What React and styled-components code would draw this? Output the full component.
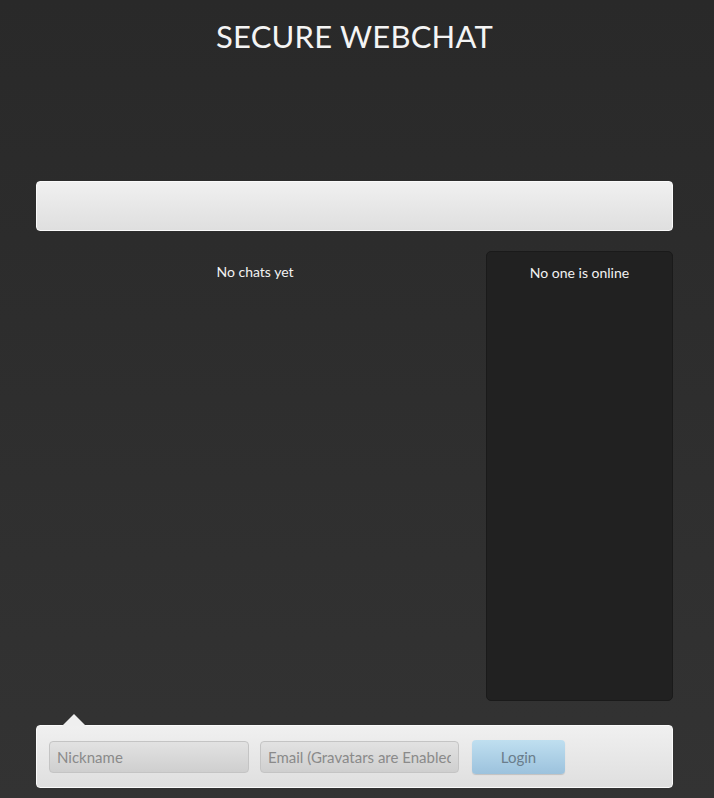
import React from 'react';
import styled, { createGlobalStyle } from 'styled-components';

const GlobalStyle = createGlobalStyle`
  html, body {
    margin: 0;
    padding: 0;
  }
  body {
    font-family: Lato, "Open Sans", sans-serif;
    background: #2a2a2a;
  }
`;

const Page = styled.div`
  height: 798px;
  box-sizing: border-box;
  background: linear-gradient(180deg, #292929 0%, #333333 100%);
  padding: 0 41px 0 36px;
  display: flex;
  flex-direction: column;
`;

const Title = styled.h1`
  margin: 0;
  padding-top: 16px;
  height: 181px;
  box-sizing: border-box;
  text-align: center;
  color: #f4f4f4;
  font-size: 31px;
  font-weight: 400;
  line-height: 40px;
  letter-spacing: 0.2px;
`;

const Bar = styled.div`
  background: linear-gradient(180deg, #f0f0f0 0%, #dfdfdf 100%);
  border: 1px solid #fafafa;
  border-radius: 4px;
  box-sizing: border-box;
`;

const TopBar = styled(Bar)`
  height: 50px;
`;

const Main = styled.div`
  margin-top: 20px;
  display: flex;
  gap: 12px;
  height: 450px;
`;

const ChatArea = styled.div`
  flex: 1;
  text-align: center;
  color: #f2f2f2;
  font-size: 14px;
  padding-top: 12px;
`;

const OnlinePanel = styled.div`
  width: 187px;
  box-sizing: border-box;
  background: #212121;
  border: 1px solid #1a1a1a;
  border-radius: 5px;
  text-align: center;
  color: #f2f2f2;
  font-size: 14px;
  padding-top: 12px;
`;

const LoginWrap = styled.div`
  position: relative;
  margin-top: 24px;
`;

const Arrow = styled.div`
  position: absolute;
  left: 26px;
  top: -11px;
  width: 0;
  height: 0;
  border-left: 12px solid transparent;
  border-right: 12px solid transparent;
  border-bottom: 12px solid #efefef;
`;

const LoginBar = styled(Bar)`
  height: 63px;
  display: flex;
  align-items: center;
  padding: 0 12px;
  gap: 11px;
`;

const Input = styled.input`
  width: ${p => p.$w}px;
  height: 32px;
  box-sizing: border-box;
  border: 1px solid #c4c4c4;
  border-radius: 4px;
  background: linear-gradient(180deg, #e2e2e2 0%, #cfcfcf 100%);
  padding: 0 7px;
  font-family: Lato, "Open Sans", sans-serif;
  font-size: 15px;
  color: #555;
  outline: none;

  &::placeholder {
    color: #8a8a8a;
  }
`;

const LoginButton = styled.button`
  margin-left: 2px;
  width: 93px;
  height: 34px;
  border: none;
  border-radius: 4px;
  background: linear-gradient(180deg, #bfdff0 0%, #9cc2dd 100%);
  box-shadow: 0 1px 1px rgba(0, 0, 0, 0.15);
  font-family: Lato, "Open Sans", sans-serif;
  font-size: 15px;
  color: #6a7d8c;
  cursor: pointer;
`;

const App = () => (
  <>
    <GlobalStyle />
    <Page>
      <Title>SECURE WEBCHAT</Title>
      <TopBar />
      <Main>
        <ChatArea>No chats yet</ChatArea>
        <OnlinePanel>No one is online</OnlinePanel>
      </Main>
      <LoginWrap>
        <Arrow />
        <LoginBar>
          <Input $w={200} placeholder="Nickname" />
          <Input $w={199} placeholder="Email (Gravatars are Enabled)" />
          <LoginButton>Login</LoginButton>
        </LoginBar>
      </LoginWrap>
    </Page>
  </>
);

export default App;
